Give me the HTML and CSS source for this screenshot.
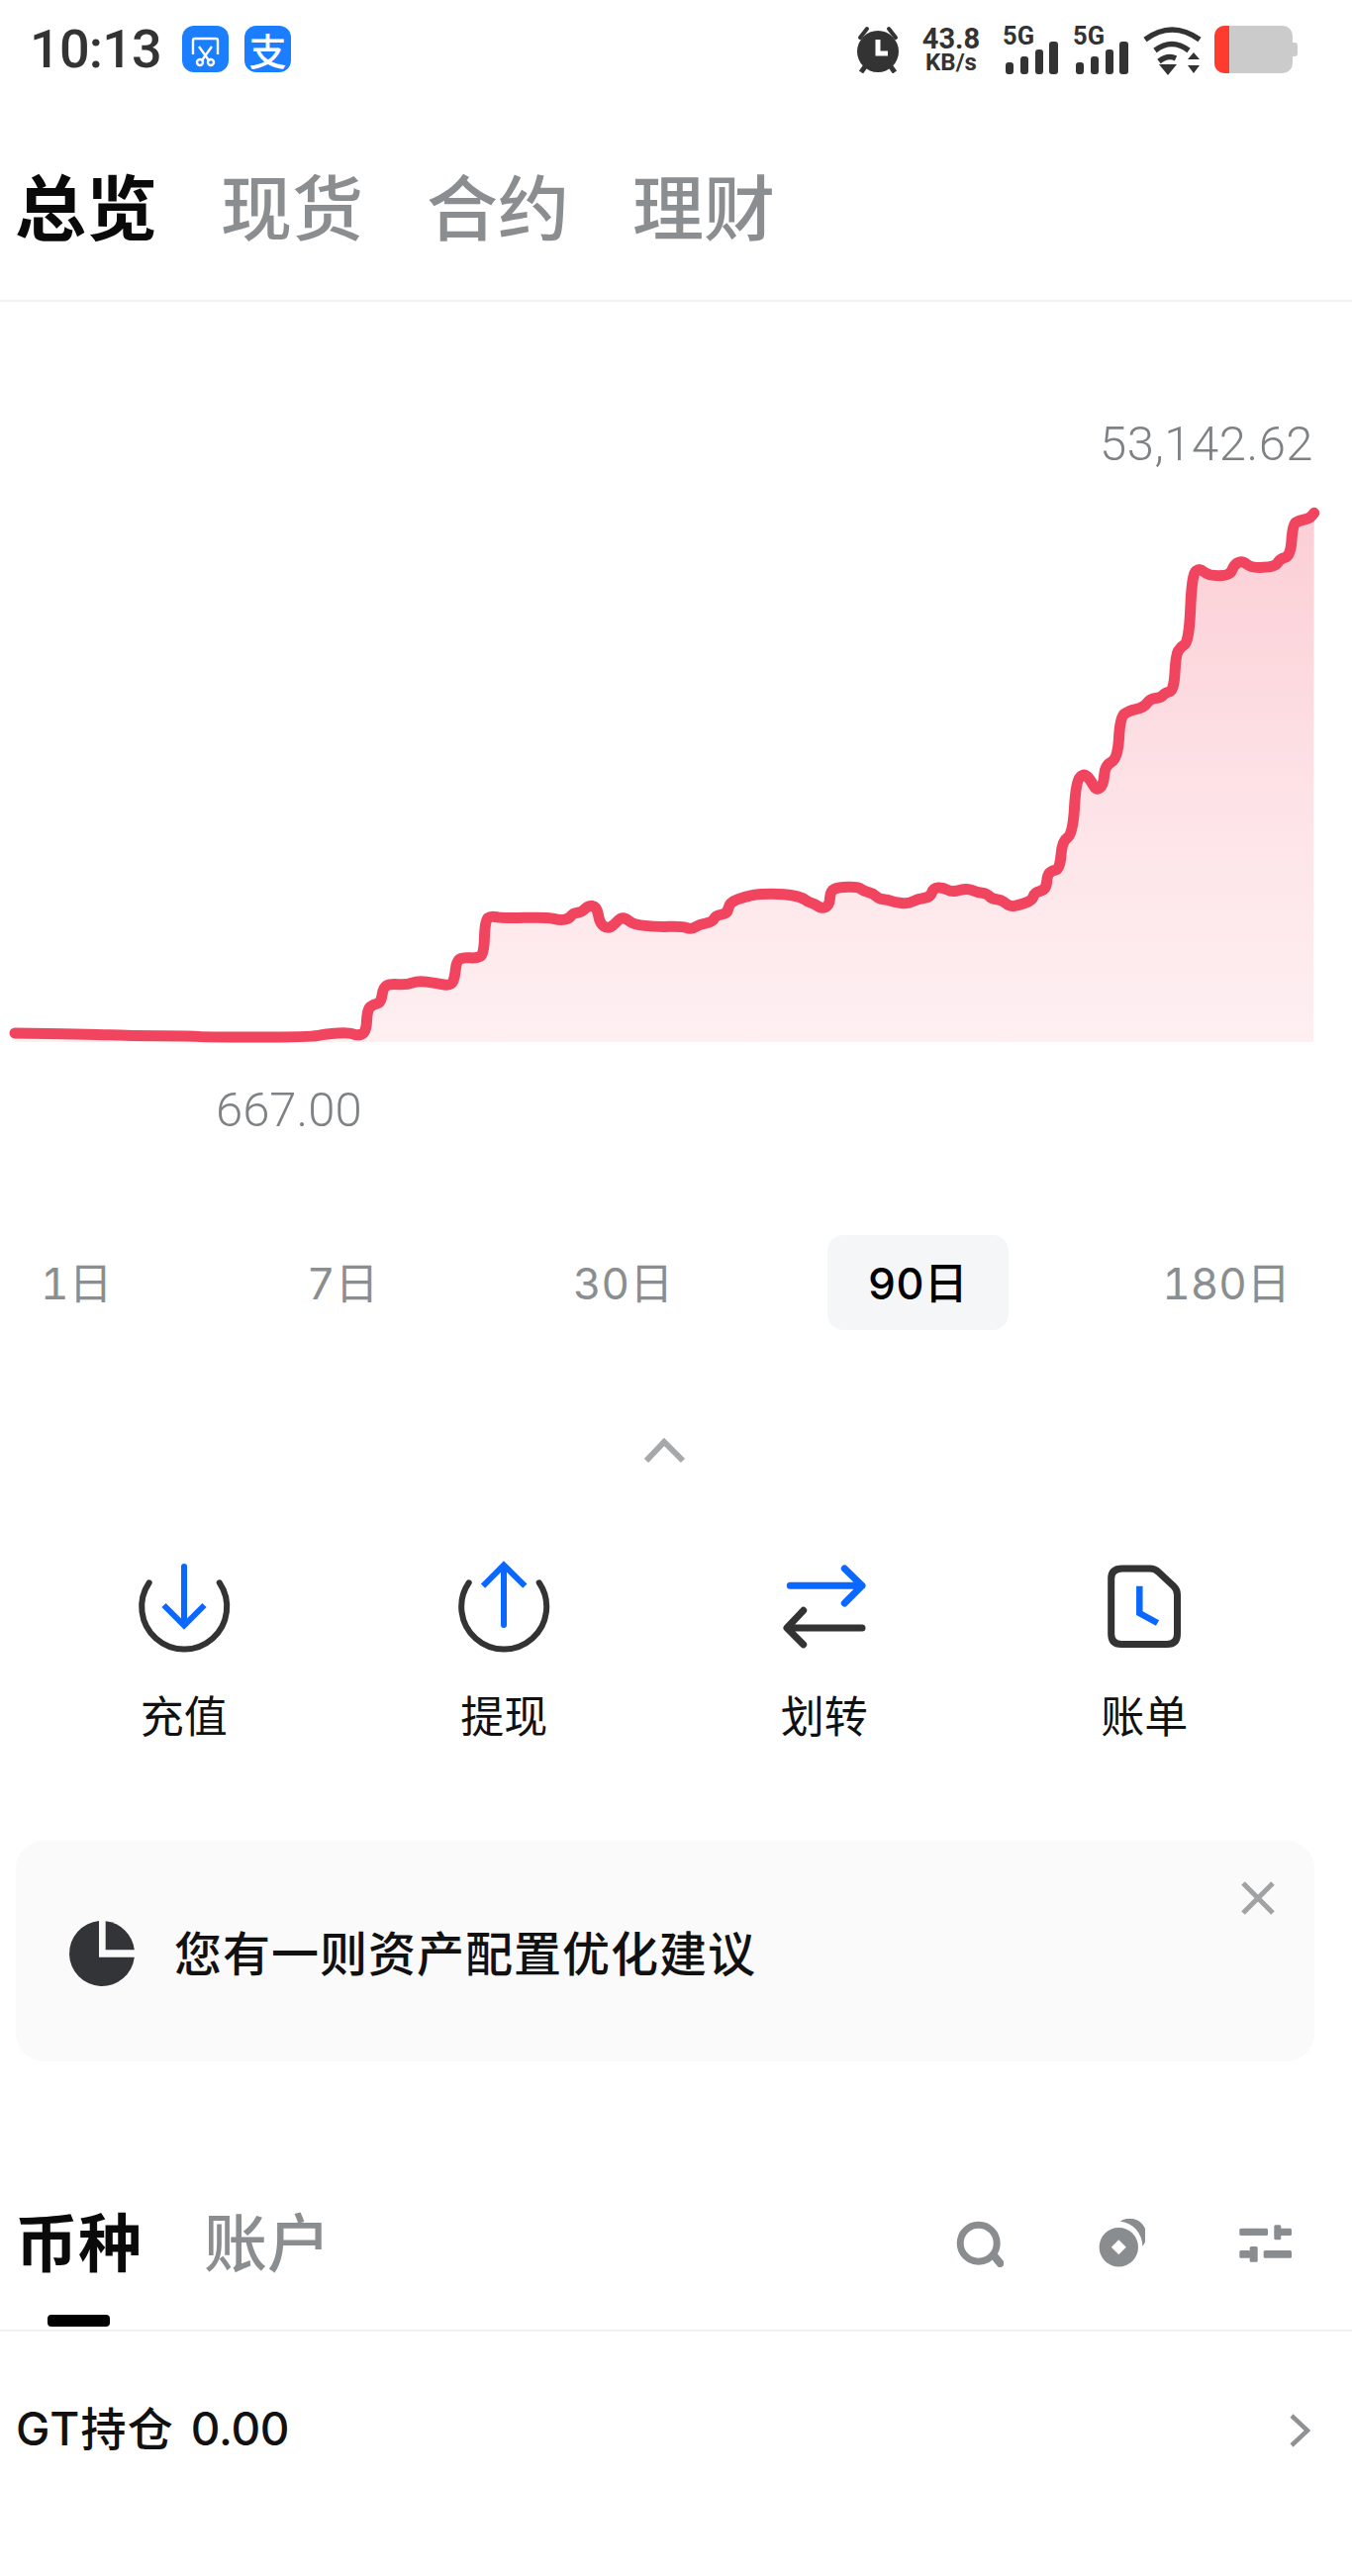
FILE: index.html
```html
<!DOCTYPE html>
<html lang="zh-CN">
<head>
    <meta charset="UTF-8">
    <title>总览</title>
    <link rel="stylesheet" href="styles.css">
</head>
<body>
<div class="status">
    <span class="clock">10:13</span>
    <span class="app-icon app-first">
        <svg width="47" height="47" viewBox="0 0 47 47" fill="none" stroke="#fff" stroke-width="2.4">
            <path d="M11 29V15Q11 13 13 13H34Q36 13 36 15V29"/>
            <path d="M17 21L27 35M30 21L20 35"/>
            <circle cx="18" cy="37" r="3"/>
            <circle cx="29" cy="37" r="3"/>
        </svg>
    </span>
    <span class="app-icon app-pay">支</span>

    <div class="status-right">
        <svg class="alarm" width="50" height="48" viewBox="0 0 50 48" fill="#333">
            <circle cx="25" cy="26" r="21"/>
            <path d="M7 12L14 3" stroke="#333" stroke-width="4" stroke-linecap="round"/>
            <path d="M43 12L36 3" stroke="#333" stroke-width="4" stroke-linecap="round"/>
            <path d="M8 47L13 40M42 47L37 40" stroke="#333" stroke-width="5"/>
            <path d="M25 14V28H35" fill="none" stroke="#fff" stroke-width="5"/>
        </svg>
        <div class="net">
            <div class="net-num">43.8</div>
            <div class="net-unit">KB/s</div>
        </div>
        <svg class="signal" width="60" height="58" viewBox="-2 -8 60 58" fill="#333">
            <text x="0" y="19" class="signal-text">5G</text>
            <rect x="3" y="37" width="8" height="12" rx="3"/>
            <rect x="18" y="31" width="8" height="18" rx="3"/>
            <rect x="33" y="24" width="8" height="25" rx="3"/>
            <rect x="47" y="16" width="9" height="33" rx="3"/>
        </svg>
        <svg class="signal" width="60" height="58" viewBox="-2 -8 60 58" fill="#333">
            <text x="0" y="19" class="signal-text">5G</text>
            <rect x="3" y="37" width="8" height="12" rx="3"/>
            <rect x="18" y="31" width="8" height="18" rx="3"/>
            <rect x="33" y="24" width="8" height="25" rx="3"/>
            <rect x="47" y="16" width="9" height="33" rx="3"/>
        </svg>
        <svg class="wifi" width="59" height="50" viewBox="0 0 59 50" fill="none" stroke="#333" stroke-width="5.5">
            <path d="M2 14Q29 -6 57 14"/>
            <path d="M12 25Q29 12 46 25"/>
            <path d="M16 36Q25 29 33 33" />
            <path d="M16 39H34L25 50Z" fill="#333" stroke="none"/>
            <path d="M45 34L51 27L57 34ZM45 40H57L51 48Z" fill="#333" stroke="none"/>
        </svg>
        <div class="battery"><div class="battery-low"></div></div>
    </div>
</div>

<div class="top-tabs">
    <span class="top-tab on">总览</span>
    <span class="top-tab">现货</span>
    <span class="top-tab">合约</span>
    <span class="top-tab">理财</span>
</div>

<div class="chart">
    <svg class="chart-svg" width="1366" height="943" viewBox="0 305 1366 943">
        <defs>
            <linearGradient id="area" x1="0" y1="518" x2="0" y2="1053" gradientUnits="userSpaceOnUse">
                <stop offset="0" stop-color="#fbced5"/>
                <stop offset="0.55" stop-color="#fde3e7"/>
                <stop offset="1" stop-color="#feeff1"/>
            </linearGradient>
        </defs>
        <path id="chartArea" fill="url(#area)"/>
        <path id="chartLine" fill="none" stroke="#f0445f" stroke-width="11" stroke-linecap="round" stroke-linejoin="round"/>
    </svg>
    <span class="chart-max">53,142.62</span>
    <span class="chart-min">667.00</span>
</div>

<div class="ranges">
    <span class="range">1日</span>
    <span class="range">7日</span>
    <span class="range">30日</span>
    <span class="range on">90日</span>
    <span class="range">180日</span>
</div>

<svg class="fold" width="44" height="30" viewBox="0 0 44 30" fill="none" stroke="#a6a8aa" stroke-width="6">
    <path d="M4 25L22 6L41 25"/>
</svg>

<div class="actions">
    <div class="action">
        <svg width="120" height="96" viewBox="0 0 120 96" fill="none" stroke-width="6">
            <path d="M24.7 24.3A43 43 0 1 0 95.7 24.3" stroke="#333" stroke-linecap="round"/>
            <path d="M60 8V64" stroke="#0b68ff" stroke-linecap="round"/>
            <path d="M39.5 47L60 67.5L80.5 47" stroke="#0b68ff"/>
        </svg>
        <span class="action-name">充值</span>
    </div>
    <div class="action">
        <svg width="120" height="96" viewBox="0 0 120 96" fill="none" stroke-width="6">
            <path d="M24.7 24.3A43 43 0 1 0 95.7 24.3" stroke="#333" stroke-linecap="round"/>
            <path d="M60 10V67" stroke="#0b68ff" stroke-linecap="round"/>
            <path d="M39 27.7L60 6.5L81.4 27.7" stroke="#0b68ff"/>
        </svg>
        <span class="action-name">提现</span>
    </div>
    <div class="action">
        <svg width="120" height="96" viewBox="0 0 120 96" fill="none" stroke-width="7" stroke-linecap="round" stroke-linejoin="round">
            <path d="M25.3 27.3H98M80.3 10L98 27.3L80.3 45" stroke="#0b68ff"/>
            <path d="M98 70H24M38.7 52.3L22 70L38.7 86.7" stroke="#333"/>
        </svg>
        <span class="action-name">划转</span>
    </div>
    <div class="action">
        <svg width="120" height="96" viewBox="0 0 120 96" fill="none" stroke-width="7">
            <path d="M38 10H66Q71 10 74.5 13.5L90 28Q93.5 31.5 93.5 36.5V76Q93.5 86.5 83 86.5H37Q26.7 86.5 26.7 76V20Q26.7 10 38 10Z" stroke="#333"/>
            <path d="M55.3 27.7V55L73.5 65" stroke="#0b68ff" stroke-width="6.5"/>
        </svg>
        <span class="action-name">账单</span>
    </div>
</div>

<div class="notice">
    <svg width="70" height="70" viewBox="0 0 70 70" fill="#333438">
        <path d="M32 2.1V38.7H67.8A33 33 0 1 1 32 2.1Z"/>
        <path d="M38.7 2.2A33 33 0 0 1 67.8 31.3H38.7Z"/>
    </svg>
    <span class="notice-text">您有一则资产配置优化建议</span>
    <svg class="notice-close" width="34" height="34" viewBox="0 0 34 34" fill="none" stroke="#a0a2a4" stroke-width="5">
        <path d="M2 2L32 32M32 2L2 32"/>
    </svg>
</div>

<div class="coin-head">
    <span class="coin-tab on">币种</span>
    <span class="coin-tab">账户</span>
    <div class="coin-tools">
        <svg width="48" height="48" viewBox="0 0 48 48" fill="none" stroke="#8a8d8f">
            <circle cx="22.7" cy="23.7" r="18.5" stroke-width="7"/>
            <path d="M39 37.3L44.5 44" stroke-width="8" stroke-linecap="round"/>
        </svg>
        <svg width="48" height="50" viewBox="0 0 48 50" fill="#8a8d8f">
            <path fill-rule="evenodd" d="M21.3 9A19.7 19.7 0 1 0 21.3 48.4A19.7 19.7 0 1 0 21.3 9ZM21.3 21.2L28.8 28.7L21.3 36.2L13.8 28.7Z"/>
            <path d="M22.7 2.7A17 17 0 0 1 45.3 27.7A25 25 0 0 0 22.7 2.7Z"/>
        </svg>
        <svg width="54" height="38" viewBox="0 0 54 38" fill="#8a8d8f">
            <rect x="0.3" y="3.7" width="28.7" height="7.3" rx="1.5"/>
            <rect x="35.3" y="0.3" width="7" height="15" rx="1.5"/>
            <rect x="41" y="3.7" width="12" height="7.3" rx="1.5"/>
            <rect x="0.3" y="26" width="11" height="7.7" rx="1.5"/>
            <rect x="10.7" y="22" width="8" height="15.7" rx="1.5"/>
            <rect x="24.7" y="26" width="28.3" height="7.7" rx="1.5"/>
        </svg>
    </div>
</div>

<div class="gt-row">
    <span class="gt-text"><span class="gt-name">GT持仓</span><span class="gt-num">0.00</span></span>
    <svg class="gt-arrow" width="24" height="36" viewBox="0 0 24 36" fill="none" stroke="#8f9193" stroke-width="4.5">
        <path d="M4 3L20 18L4 33"/>
    </svg>
</div>

<script src="chart.js"></script>
</body>
</html>
```
FILE: styles.css
```css
*{
    margin: 0;
    padding: 0;
    box-sizing: border-box;
}

body{
    width: 1366px;
    height: 2603px;
    overflow: hidden;
    background: #fff;
    color: #111;
    font-family: Inter, "Noto Sans CJK SC", sans-serif;
}

svg{
    display: block;
    flex: none;
}

/* status bar */
.status{
    display: flex;
    align-items: flex-start;
    height: 100px;
    padding: 26px 55px 0 30px;
}
.clock{
    font-family: Roboto, sans-serif;
    font-size: 54px;
    line-height: 47px;
    font-weight: 500;
    color: #333;
    letter-spacing: -0.8px;
}
.app-icon{
    width: 47px;
    height: 47px;
    border-radius: 12px;
    background: #1a7eff;
    color: #fff;
}
.app-first{
    margin-left: 21px;
}
.app-pay{
    margin-left: 16px;
    font-family: "Noto Sans CJK SC", sans-serif;
    font-size: 38px;
    font-weight: 500;
    line-height: 47px;
    text-align: center;
}
.status-right{
    display: flex;
    align-items: flex-start;
    margin-left: auto;
}
.net{
    width: 62px;
    margin-left: 18px;
    margin-top: 1px;
    font-family: Roboto, sans-serif;
    font-weight: 700;
    color: #333;
    text-align: center;
}
.net-num{
    font-size: 29px;
    line-height: 24px;
}
.net-unit{
    font-size: 24px;
    line-height: 24px;
}
.signal{
    margin: -8px -3px 0 19px;
}
.signal + .signal{
    margin-left: 14px;
}
.signal-text{
    font-family: Roboto, sans-serif;
    font-size: 25.5px;
    font-weight: 700;
    fill: #333;
}
.wifi{
    margin-left: 16px;
}
.battery{
    position: relative;
    width: 79px;
    height: 48px;
    margin-left: 13px;
    margin-right: 5px;
    border-radius: 10px;
    background: #cbcbcb;
    overflow: visible;
}
.battery::after{
    content: "";
    position: absolute;
    right: -5px;
    top: 17px;
    width: 5px;
    height: 14px;
    border-radius: 0 3px 3px 0;
    background: #cbcbcb;
}
.battery-low{
    width: 15px;
    height: 48px;
    border-radius: 10px 0 0 10px;
    background: #ff3a2f;
}

/* top tabs */
.top-tabs{
    display: flex;
    gap: 64px;
    height: 205px;
    padding: 75px 0 0 15px;
    border-bottom: 2px solid #f2f3f4;
}
.top-tab{
    font-size: 72px;
    line-height: 72px;
    font-weight: 500;
    color: #8b8e90;
}
.top-tab.on{
    font-weight: 700;
    color: #0a0a0a;
}

/* chart */
.chart{
    position: relative;
    height: 943px;
}
.chart-max,
.chart-min{
    position: absolute;
    font-family: Roboto, sans-serif;
    font-size: 49px;
    line-height: 56px;
    font-weight: 300;
    color: #7f8284;
}
.chart-max{
    top: 116px;
    right: 39px;
    letter-spacing: 0.5px;
}
.chart-min{
    top: 789px;
    left: 218px;
}

/* ranges */
.ranges{
    display: flex;
    gap: 114.5px;
    height: 96px;
}
.range{
    padding: 0 41px;
    font-size: 44px;
    font-variant-numeric: tabular-nums;
    line-height: 98px;
    color: #8b8e90;
    border-radius: 16px;
}
.range.on{
    font-weight: 500;
    color: #000;
    background: #f5f6f8;
}

.fold{
    margin: 107px 0 0 649px;
}

/* actions */
.actions{
    display: grid;
    grid-template-columns: repeat(4, 323.5px);
    margin-top: 94px;
    padding-left: 24px;
}
.action{
    display: flex;
    flex-direction: column;
    align-items: center;
}
.action-name{
    margin-top: 34px;
    font-size: 44px;
    line-height: 60px;
    color: #111;
}

/* notice */
.notice{
    position: relative;
    display: flex;
    align-items: center;
    width: 1312px;
    height: 223px;
    margin: 95px 0 0 16px;
    padding: 5px 0 0 52px;
    border-radius: 28px;
    background: #fafafa;
}
.notice-text{
    margin: -6px 0 0 38px;
    font-size: 48px;
    font-weight: 500;
    letter-spacing: 1px;
    color: #111;
}
.notice-close{
    position: absolute;
    top: 41px;
    right: 40px;
}

/* coin list head */
.coin-head{
    display: flex;
    gap: 63px;
    height: 127px;
    margin-top: 146px;
    padding-left: 15px;
    border-bottom: 2px solid #f1f2f3;
}
.coin-tab{
    display: flex;
    flex-direction: column;
    align-items: center;
    font-size: 64px;
    line-height: 76px;
    font-weight: 500;
    color: #8b8e90;
}
.coin-tab.on{
    font-weight: 700;
    color: #0a0a0a;
}
.coin-tab.on::after{
    content: "";
    width: 63px;
    height: 12px;
    margin-top: 34px;
    border-radius: 4px;
    background: #000;
}
.coin-tools{
    display: flex;
    align-items: center;
    gap: 95px;
    height: 75px;
    margin-left: auto;
    padding-right: 60px;
}

/* gt row */
.gt-row{
    display: flex;
    align-items: center;
    justify-content: space-between;
    height: 190px;
    padding: 0 41px 0 16px;
}
.gt-text{
    font-size: 46px;
    font-weight: 500;
    color: #111;
}
.gt-name{
    letter-spacing: 1.2px;
}
.gt-num{
    margin-left: 17px;
    letter-spacing: -0.3px;
}
.gt-arrow{
    margin-top: 10px;
}
```
FILE: chart.js
```javascript
// line points read off the 90 day curve
var pts = [
    [15,1044],[91,1045],[131,1046.7],[196,1046.7],[205,1048],[314,1048],[329,1044.7],[353,1043.3],
    [361,1046.7],[370,1043.3],[371,1020],[377,1015],[385,1013.3],[387,998],[394,994],[411,995.3],
    [422,991],[440,993.3],[453,996],[459,991.7],[461,971.7],[467,967.3],[483,968.3],[489,963.3],
    [490,930],[496,925.3],[507,928],[553,926.7],[566,930],[575,928.3],[579,922.7],[588,921.7],
    [594,915],[603,916],[606,933.3],[614,938.3],[620,935],[627,927.3],[633,928.3],[640,934],
    [663,936.7],[690,936],[698,939.3],[707,934],[720,931.7],[723,925],[735,923.3],[737,911.7],
    [753,906],[767,903.3],[793,903.3],[810,906.7],[817,911.7],[823,913.3],[830,918.3],[838,915],
    [839,900],[847,896.7],[867,896],[873,900.7],[882,902.7],[888,908.3],[897,909],[903,911.7],
    [918,913.3],[927,908.3],[940,906.7],[943,897.3],[953,896.7],[962,901.7],[977,897.3],[987,901.7],
    [997,902.7],[1002,908.3],[1012,909.3],[1020,916],[1028,915],[1043,910],[1045,901.7],[1057,899],
    [1058,885],[1062,880],[1071,878.3],[1073,850],[1084,843],[1087,790],[1094.6,781.7],[1101,786.7],
    [1107.6,799.3],[1115,793],[1116.4,773.3],[1129.4,766.7],[1131.6,725],[1140,718.3],[1155.6,715],
    [1162,706],[1173,705],[1177,700],[1186,698],[1188,661.7],[1192.6,654],[1201.3,648.3],[1204.3,580],
    [1212,574],[1221,581.7],[1242.7,581.7],[1247,570],[1255.7,566.7],[1264.4,574],[1288.4,572.7],
    [1293,565],[1304,561.7],[1306,530],[1312.4,526],[1323.2,524],[1327.7,518.3]
];

// smooth through the midpoints so the steps get round corners
var d = "M" + pts[0][0] + "," + pts[0][1];
for (var i = 1; i < pts.length - 1; i++) {
    var mx = (pts[i][0] + pts[i + 1][0]) / 2;
    var my = (pts[i][1] + pts[i + 1][1]) / 2;
    d += "Q" + pts[i][0] + "," + pts[i][1] + " " + mx + "," + my;
}
d += "L" + pts[pts.length - 1][0] + "," + pts[pts.length - 1][1];

document.getElementById("chartLine").setAttribute("d", d);
document.getElementById("chartArea").setAttribute("d", d + "L1327,1053L15,1053Z");
```
